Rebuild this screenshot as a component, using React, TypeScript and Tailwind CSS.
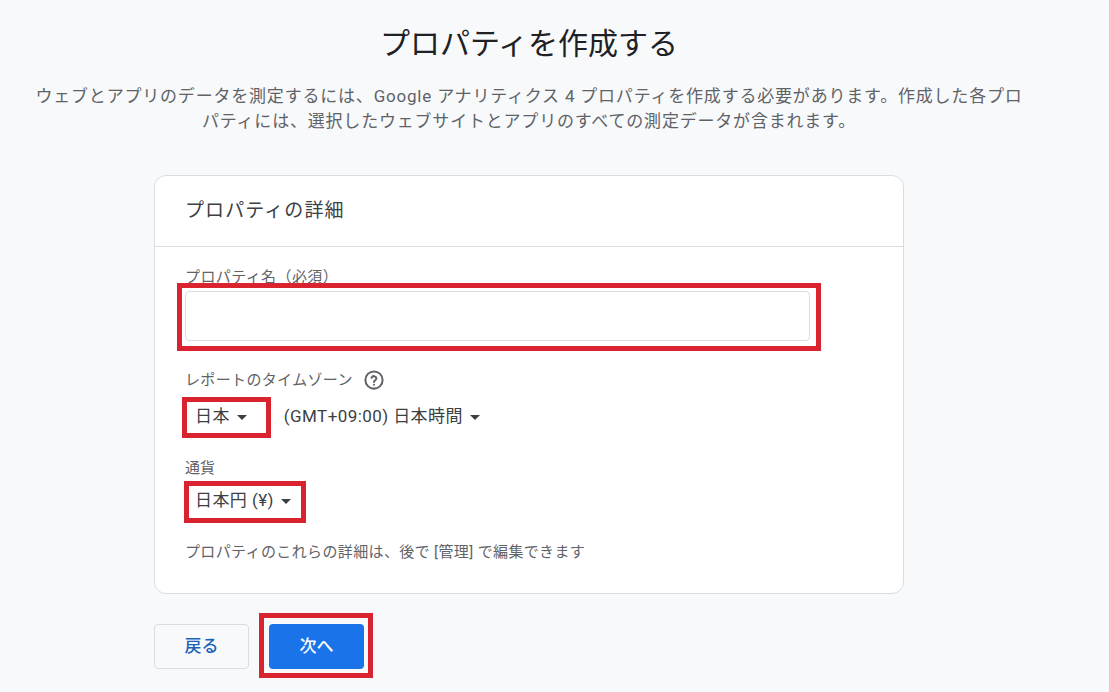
import { Fragment } from "react";

const font = { fontFamily: '"Roboto", "Noto Sans CJK JP", sans-serif' };

function Caret() {
  return <span className="ml-[7px] inline-block w-0 h-0 border-x-[5px] border-x-transparent border-t-[5px] border-t-[#3c4043]" />;
}

function Select({ label, className = "" }: { label: string; className?: string }) {
  return (
    <div className={`flex items-center text-[17px] tracking-[0.42px] text-[#3c4043] ${className}`}>
      {label}
      <Caret />
    </div>
  );
}

function HelpIcon() {
  return (
    <svg width="22" height="22" viewBox="0 0 24 24" fill="none" stroke="#5f6368" strokeWidth="2.2" strokeLinecap="round">
      <circle cx="12" cy="12" r="9.4" />
      <path d="M9.3 9.6a2.8 2.8 0 0 1 5.4 .6c0 1.9-2.7 2.2-2.7 4" />
      <circle cx="12" cy="17.2" r="0.5" fill="#5f6368" strokeWidth="1.2" />
    </svg>
  );
}

// red annotation frames painted over the form
function Mark({ className }: { className: string }) {
  return <div className={`absolute border-[5px] border-[#d9232e] pointer-events-none ${className}`} />;
}

export default function App() {
  const lines = [
    "ウェブとアプリのデータを測定するには、Google アナリティクス 4 プロパティを作成する必要があります。作成した各プロ",
    "パティには、選択したウェブサイトとアプリのすべての測定データが含まれます。",
  ];

  return (
    <div style={font} className="w-[1109px] h-[692px] overflow-hidden bg-[#f8f9fa]">
      <div className="w-[1058px] flex flex-col items-center">
        <h1 className="mt-[22px] h-[44px] leading-[44px] text-[30px] text-[#202124]">プロパティを作成する</h1>

        <p className="mt-[18px] text-center text-[17px] leading-[25px] tracking-[0.8px] text-[#5f6368] whitespace-nowrap">
          {lines.map((line, i) => (
            <Fragment key={i}>
              {line}
              {i === 0 && <br />}
            </Fragment>
          ))}
        </p>

        <div className="relative mt-[41px] w-[750px]">
          <section className="h-[419px] bg-white border border-[#dadce0] rounded-[12px]">
            <div className="h-[71px] border-b border-[#dadce0] pl-[30px] flex items-center">
              <h2 className="text-[19px] tracking-[1.1px] text-[#3c4043]">プロパティの詳細</h2>
            </div>

            <div className="px-[30px]">
              <label className="block mt-[20px] h-[20px] leading-[20px] text-[15px] tracking-[0.4px] text-[#5f6368]">プロパティ名（必須）</label>
              <input className="block mt-[4px] w-[625px] h-[50px] bg-white border border-[#dadce0] rounded-[4px]" />

              <div className="mt-[28px] flex items-center h-[22px] text-[15px] tracking-[0.35px] text-[#5f6368]">
                レポートのタイムゾーン
                <span className="ml-[10px] flex"><HelpIcon /></span>
              </div>
              <div className="mt-[14px] h-[24px] flex items-center pl-[10px]">
                <Select label="日本" />
                <Select label="(GMT+09:00) 日本時間" className="ml-[37px]" />
              </div>

              <div className="mt-[29px] h-[20px] leading-[20px] text-[15px] text-[#5f6368]">通貨</div>
              <div className="mt-[11px] h-[24px] flex items-center pl-[10px]">
                <Select label="日本円 (¥)" />
              </div>

              <p className="mt-[29px] h-[20px] leading-[20px] text-[15px] tracking-[0.37px] text-[#5f6368]">
                プロパティのこれらの詳細は、後で [管理] で編集できます
              </p>
            </div>
          </section>

          <div className="mt-[30px] flex gap-[20px]">
            <button className="w-[95px] h-[45px] rounded-[4px] border border-[#dadce0] text-[17px] font-medium text-[#1a62b8]">戻る</button>
            <button className="w-[95px] h-[45px] rounded-[4px] bg-[#1a73e8] text-[17px] font-medium text-white">次へ</button>
          </div>

          <Mark className="left-[23px] top-[108px] w-[644px] h-[68px]" />
          <Mark className="left-[28px] top-[222px] w-[89px] h-[41px]" />
          <Mark className="left-[30px] top-[306px] w-[122px] h-[42px]" />
          <Mark className="left-[105px] top-[438px] w-[114px] h-[65px]" />
        </div>
      </div>
    </div>
  );
}
